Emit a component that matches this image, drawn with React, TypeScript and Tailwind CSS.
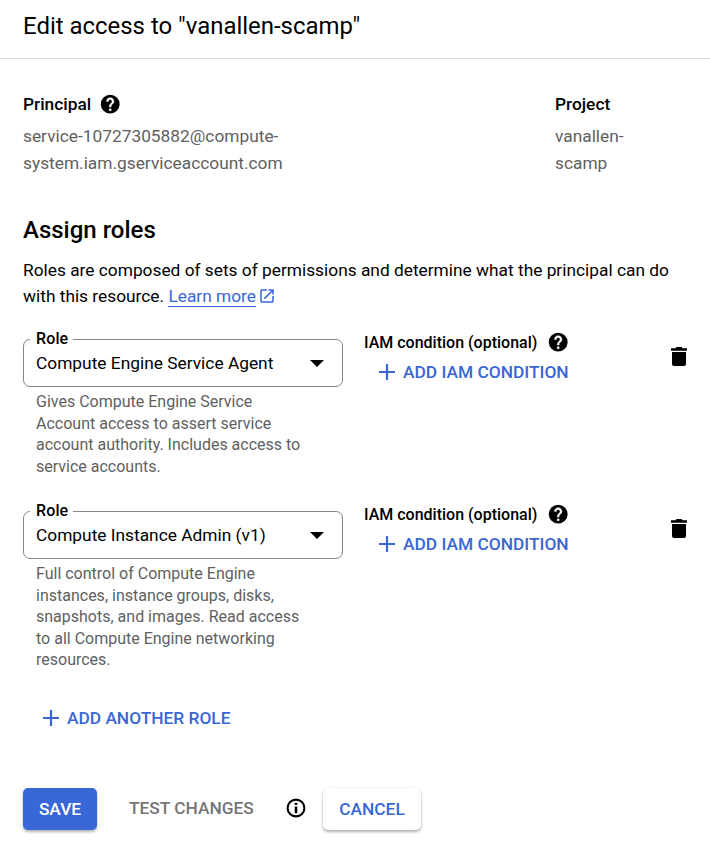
import React from "react";

function HelpIcon() {
  return (
    <svg viewBox="0 0 24 24" className="size-[22.4px] shrink-0">
      <circle cx="12" cy="12" r="10.100" />
      <path fill="white" stroke="white" strokeWidth="0.500" d="M11 17h2v2h-2zM15.070 11.250l-.9.920C13.450 12.900 13 13.500 13 15h-2v-.5c0-1.100.45-2.100 1.170-2.830l1.240-1.260c.37-.36.59-.86.59-1.410 0-1.100-.9-2-2-2s-2 .9-2 2H8c0-2.210 1.790-4 4-4s4 1.790 4 4c0 .88-.36 1.680-.93 2.250z" />
    </svg>
  );
}

function PlusIcon() {
  return (
    <svg viewBox="0 0 16 16" className="size-4 shrink-0 fill-[#3967d6]">
      <path d="M6.900 0h2.200v6.900H16v2.200H9.100V16H6.900V9.100H0V6.900h6.900z" />
    </svg>
  );
}

function OpenIcon() {
  return (
    <svg viewBox="0 0 24 24" className="size-[18px] shrink-0 fill-[#3967d6]">
      <path d="M19 19H5V5h7V3H5c-1.110 0-2 .9-2 2v14c0 1.100.89 2 2 2h14c1.100 0 2-.9 2-2v-7h-2v7zM14 3v2h3.590l-9.830 9.830 1.410 1.410L19 6.410V10h2V3h-7z" />
    </svg>
  );
}

function RoleRow({ role, lines, className }: { role: string; lines: string[]; className: string }) {
  return (
    <div className={`flex ${className}`}>
      <div className="w-[320px] shrink-0">
        <div className="relative flex h-12 items-center rounded-[7px] border border-[#80868b] pl-3 pr-[18.5px]">
          <span className="absolute -top-[12px] left-[6px] bg-white pl-[6px] pr-[5px] text-[16px] leading-[22px] font-medium tracking-[0.13px]">
            Role
          </span>
          <span className="flex-1 text-[17.33px] leading-[24px]">{role}</span>
          <svg viewBox="0 0 14 7" className="h-[7px] w-[14px]">
            <path d="M0 0h14L7 7z" />
          </svg>
        </div>
        <div className="pt-[4.3px] pl-[13px] text-[16px] leading-[21.4px] text-[#5f5f5f]">
          {lines.map((line) => (
            <div key={line} className="whitespace-nowrap">{line}</div>
          ))}
        </div>
      </div>
      <div className="ml-[21px] flex-1">
        <div className="-mt-[8px] flex h-[22px] items-center gap-[9.3px] text-[16px] font-medium">
          <span className="whitespace-nowrap pt-px">IAM condition (optional)</span>
          <HelpIcon />
        </div>
        <button className="mt-[7px] ml-[15px] flex h-6 items-center gap-2 whitespace-nowrap text-[17.33px] font-medium text-[#3967d6]">
          <PlusIcon />
          <span className="pt-px">ADD IAM CONDITION</span>
        </button>
      </div>
      <svg viewBox="0 0 16 19" className="mt-[8px] mr-[23px] h-[19px] w-4 shrink-0">
        <path d="M1 5h14v12a2 2 0 0 1-2 2H3a2 2 0 0 1-2-2zM0 1.200h4.500L5.500 0h5l1 1.200H16v2.600H0z" />
      </svg>
    </div>
  );
}

export default function App() {
  return (
    <main className="h-[852px] w-[710px] overflow-hidden bg-white font-[Roboto,sans-serif] text-[17.32px] text-black">
      <header className="h-[59px] border-b border-[#dadce0] pt-[10px] pl-[23px] text-[23.95px] leading-[32px]">
        Edit access to "vanallen-scamp"
      </header>
      <section className="flex pt-[33px] pl-[23px]">
        <div className="w-[532px]">
          <h2 className="flex h-[24px] items-center gap-[8.3px] font-medium">
            <span className="pt-px">Principal</span>
            <HelpIcon />
          </h2>
          <p className="mt-[7px] leading-[27px] text-[#5f5f5f]">
            service-10727305882@compute-
            <br />
            system.iam.gserviceaccount.com
          </p>
        </div>
        <div>
          <h2 className="flex h-[24px] items-center pt-px font-medium">Project</h2>
          <p className="mt-[7px] leading-[27px] text-[#5f5f5f]">
            vanallen-
            <br />
            scamp
          </p>
        </div>
      </section>
      <h1 className="mt-[37px] pl-[23px] text-[24px] leading-[32px] font-medium">Assign roles</h1>
      <div className="mt-[11px] pl-[23px] leading-[26px]">
        <p className="whitespace-nowrap">Roles are composed of sets of permissions and determine what the principal can do</p>
        <p className="flex items-center">
          with this resource.&nbsp;
          <a className="border-b border-[#3967d6] leading-[20px] text-[#3967d6]">Learn more</a>
          <span className="ml-[2px]"><OpenIcon /></span>
        </p>
      </div>
      <RoleRow
        className="mt-[30px] ml-[23px] h-[172px]"
        role="Compute Engine Service Agent"
        lines={["Gives Compute Engine Service", "Account access to assert service", "account authority. Includes access to", "service accounts."]}
      />
      <RoleRow
        className="ml-[23px] h-[195px]"
        role="Compute Instance Admin (v1)"
        lines={["Full control of Compute Engine", "instances, instance groups, disks,", "snapshots, and images. Read access", "to all Compute Engine networking", "resources."]}
      />
      <button className="ml-[43px] flex h-6 items-center gap-2 font-medium text-[#3967d6]">
        <PlusIcon />
        <span className="pt-px">ADD ANOTHER ROLE</span>
      </button>
      <footer className="mt-[58px] ml-[23px] flex h-[42px] items-center font-medium">
        <button className="h-[42px] w-[74px] rounded-[5px] bg-[#3967d6] pt-[2px] text-white shadow-[0_2px_3px_rgba(0,0,0,0.3)]">SAVE</button>
        <span className="ml-[32px] w-[157px] text-[#757575]">TEST CHANGES</span>
        <svg viewBox="0 0 20 20" className="mb-[2px] size-5 shrink-0">
          <circle cx="10" cy="10" r="8.400" fill="none" stroke="black" strokeWidth="2.100" />
          <path d="M8.700 4.700h2.600v2.400H8.700zM8.700 8.600h2.600v6.600H8.700z" />
        </svg>
        <button className="ml-[17px] h-[42px] w-[98px] rounded-[5px] bg-white pt-[2px] text-[#3967d6] shadow-[0_2px_3px_rgba(0,0,0,0.3),0_0_2px_rgba(0,0,0,0.12)]">CANCEL</button>
      </footer>
    </main>
  );
}
